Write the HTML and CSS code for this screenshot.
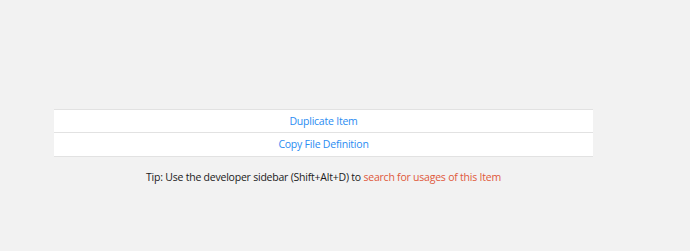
FILE: index.html
```html
<!DOCTYPE html>
<html lang="en">
<head>
  <title>Item actions</title>
  <meta name="viewport" content="width=device-width, initial-scale=1" />
  <link rel="stylesheet" href="styles.css">
</head>
<body>
  <div class="page">
    <div class="actions">
      <a class="action" href="#">Duplicate Item</a>
      <a class="action" href="#">Copy File Definition</a>
    </div>
    <p class="tip">Tip: Use the developer sidebar (Shift+Alt+D) to <a href="#" class="tip-link">search for usages of this Item</a></p>
  </div>
</body>
</html>
```

FILE: styles.css
```css
html, body {
  height: 100%;
  margin: 0;
  background-color: #f2f2f2;
}
body {
  font-family: "Open Sans", sans-serif;
  font-size: 10.5px;
  letter-spacing: -0.22px;
  color: #1a1a1a;
}
.page {
  padding: 109px 97px 0 54px;
}
.actions {
  display: flex;
  flex-direction: column;
  background: #fff;
  border: 1px solid #e2e2e2;
  border-left: none;
  border-right: none;
}
.action {
  display: block;
  height: 23px;
  line-height: 23px;
  text-align: center;
  color: #2a8cf2;
  text-decoration: none;
}
.action:first-child {
  height: 22px;
  line-height: 22px;
}
.action + .action {
  border-top: 1px solid #e2e2e2;
}
.tip {
  margin: 13px 0 0;
  line-height: 14px;
  text-align: center;
}
.tip-link {
  color: #e0583a;
  text-decoration: none;
}
```
